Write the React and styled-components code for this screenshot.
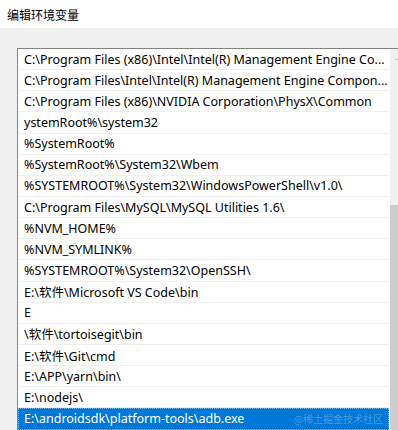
import React from 'react'
import styled, { createGlobalStyle } from 'styled-components'

const GlobalStyle = createGlobalStyle`
    html, body {
        margin: 0;
        padding: 0;
        background: #f0f0f0;
        overflow: hidden;
    }
    body {
        font-family: "Noto Sans", "Noto Sans CJK SC", sans-serif;
    }
`

const paths = [
    'C:\\Program Files (x86)\\Intel\\Intel(R) Management Engine Co...',
    'C:\\Program Files\\Intel\\Intel(R) Management Engine Compon...',
    'C:\\Program Files (x86)\\NVIDIA Corporation\\PhysX\\Common',
    'ystemRoot%\\system32',
    '%SystemRoot%',
    '%SystemRoot%\\System32\\Wbem',
    '%SYSTEMROOT%\\System32\\WindowsPowerShell\\v1.0\\',
    'C:\\Program Files\\MySQL\\MySQL Utilities 1.6\\',
    '%NVM_HOME%',
    '%NVM_SYMLINK%',
    '%SYSTEMROOT%\\System32\\OpenSSH\\',
    'E:\\软件\\Microsoft VS Code\\bin',
    'E',
    '\\软件\\tortoisegit\\bin',
    'E:\\软件\\Git\\cmd',
    'E:\\APP\\yarn\\bin\\',
    'E:\\nodejs\\',
    'E:\\androidsdk\\platform-tools\\adb.exe',
]

export default function App() {
    return (
        <Window>
            <GlobalStyle />
            <TitleBar>编辑环境变量</TitleBar>
            <Body>
                <ListBox>
                    <Rows>
                        {paths.map((p, i) => (
                            <Row key={i} selected={i === paths.length - 1}>
                                {p}
                                {i === paths.length - 1 && <Watermark>@稀土掘金技术社区</Watermark>}
                            </Row>
                        ))}
                    </Rows>
                    <ScrollBar>
                        <Arrow>
                            <svg width="8" height="5" viewBox="0 0 8 5">
                                <path d="M0.5 4.5 L4 1 L7.5 4.5" fill="none" stroke="#606060" strokeWidth="1.2" />
                            </svg>
                        </Arrow>
                        <Thumb />
                    </ScrollBar>
                </ListBox>
            </Body>
        </Window>
    )
}

const Window = styled.div`
    width: 398px;
    height: 430px;
    display: flex;
    flex-direction: column;
    overflow: hidden;
`

const TitleBar = styled.div`
    height: 28px;
    background: #ffffff;
    padding: 0 7px;
    display: flex;
    align-items: center;
    font-family: "Noto Sans CJK SC", sans-serif;
    font-size: 12px;
    color: #000;
    flex-shrink: 0;
`

const Body = styled.div`
    flex: 1;
    background: #f0f0f0;
    padding: 20px 0 0 17px;
    min-height: 0;
`

const ListBox = styled.div`
    height: 100%;
    border-top: 1px solid #828282;
    border-left: 1px solid #828282;
    background: #ffffff;
    display: flex;
    overflow: hidden;
`

const Rows = styled.div`
    flex: 1;
    display: flex;
    flex-direction: column;
    padding-right: 1px;
`

const Row = styled.div`
    position: relative;
    height: 20.15px;
    flex-shrink: 0;
    padding-left: 6px;
    display: flex;
    align-items: center;
    font-size: 12.5px;
    white-space: nowrap;
    overflow: hidden;
    color: ${p => (p.selected ? '#ffffff' : '#000000')};
    background: ${p => (p.selected ? '#0078d7' : '#ffffff')};
    border-bottom: 1px solid ${p => (p.selected ? '#0078d7' : '#f0f0f0')};
    outline: ${p => (p.selected ? '1px dotted #7ab8ea' : 'none')};
    outline-offset: -1px;
`

const Watermark = styled.span`
    position: absolute;
    right: 6px;
    top: 3px;
    font-family: "Noto Sans CJK SC", sans-serif;
    font-size: 10px;
    color: rgba(255, 255, 255, 0.28);
`

const ScrollBar = styled.div`
    width: 8px;
    background: #f0f0f0;
    display: flex;
    flex-direction: column;
    flex-shrink: 0;
`

const Arrow = styled.div`
    height: 20px;
    display: flex;
    align-items: center;
    justify-content: center;
    padding-left: 5px;
`

const Thumb = styled.div`
    margin-top: 136px;
    flex: 1;
    background: #cdcdcd;
`
